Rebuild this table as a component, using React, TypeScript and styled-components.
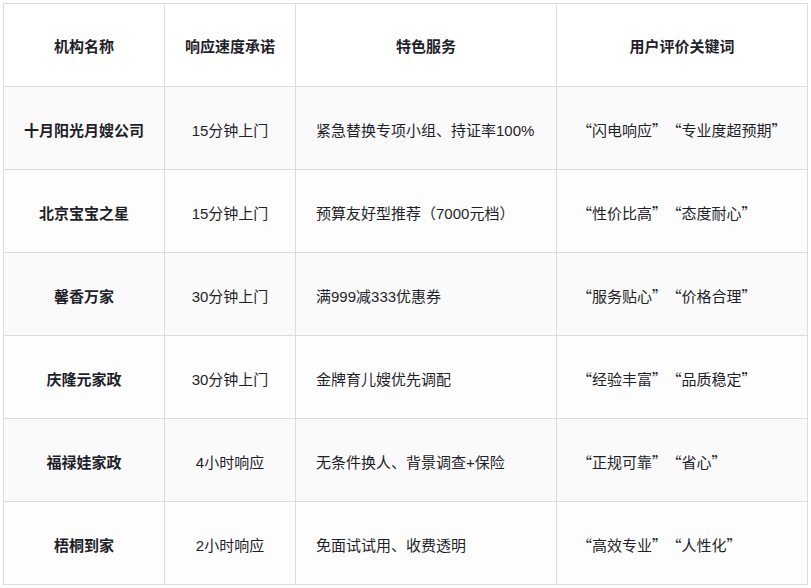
import React from 'react';
import styled, { createGlobalStyle } from 'styled-components';

interface Agency {
  name: string;
  speed: string;
  service: string;
  keywords: string[];
}

const agencies: Agency[] = [
  { name: '十月阳光月嫂公司', speed: '15分钟上门', service: '紧急替换专项小组、持证率100%', keywords: ['闪电响应', '专业度超预期'] },
  { name: '北京宝宝之星', speed: '15分钟上门', service: '预算友好型推荐（7000元档）', keywords: ['性价比高', '态度耐心'] },
  { name: '馨香万家', speed: '30分钟上门', service: '满999减333优惠券', keywords: ['服务贴心', '价格合理'] },
  { name: '庆隆元家政', speed: '30分钟上门', service: '金牌育儿嫂优先调配', keywords: ['经验丰富', '品质稳定'] },
  { name: '福禄娃家政', speed: '4小时响应', service: '无条件换人、背景调查+保险', keywords: ['正规可靠', '省心'] },
  { name: '梧桐到家', speed: '2小时响应', service: '免面试试用、收费透明', keywords: ['高效专业', '人性化'] },
];

const GlobalStyle = createGlobalStyle`
  body {
    margin: 0;
    background: #ffffff;
    font-family: "Liberation Sans", "Noto Sans CJK SC", sans-serif;
  }
`;

const Page = styled.div`
  padding: 3px 0 0 3px;
`;

const Table = styled.table`
  border-collapse: collapse;
  font-size: 15px;
  color: #1f1f2a;
`;

const Row = styled.tr<{ $shade?: boolean }>`
  height: 83px;
  background: ${(p) => (p.$shade ? '#fafafa' : '#fdfdfd')};
`;

const HeadRow = styled.tr`
  height: 83px;
  background: #ffffff;
`;

const HeadCell = styled.th<{ $w: number }>`
  width: ${(p) => p.$w}px;
  border: 1px solid #dcdcdc;
  font-weight: 700;
  text-align: center;
  padding: 0;
`;

const Cell = styled.td<{ $align?: 'left' | 'center'; $bold?: boolean }>`
  border: 1px solid #dcdcdc;
  padding: 2px 20px 0;
  text-align: ${(p) => p.$align || 'center'};
  font-weight: ${(p) => (p.$bold ? 700 : 400)};
  white-space: nowrap;
`;

const KeywordCell = styled(Cell)`
  padding-left: 20px;
  padding-right: 0;
  font-family: "Noto Sans CJK SC", sans-serif;
`;

const Keyword = styled.span`
  margin-right: 7px;
`;

const App: React.FC = () => {
  return (
    <>
      <GlobalStyle />
      <Page>
        <Table>
          <thead>
            <HeadRow>
              <HeadCell $w={160}>机构名称</HeadCell>
              <HeadCell $w={130}>响应速度承诺</HeadCell>
              <HeadCell $w={260}>特色服务</HeadCell>
              <HeadCell $w={250}>用户评价关键词</HeadCell>
            </HeadRow>
          </thead>
          <tbody>
            {agencies.map((a, i) => (
              <Row key={a.name} $shade={i % 2 === 0}>
                <Cell $bold>{a.name}</Cell>
                <Cell>{a.speed}</Cell>
                <Cell $align="left">{a.service}</Cell>
                <KeywordCell $align="left">
                  {a.keywords.map((k) => (
                    <Keyword key={k}>“{k}”</Keyword>
                  ))}
                </KeywordCell>
              </Row>
            ))}
          </tbody>
        </Table>
      </Page>
    </>
  );
};

export default App;
